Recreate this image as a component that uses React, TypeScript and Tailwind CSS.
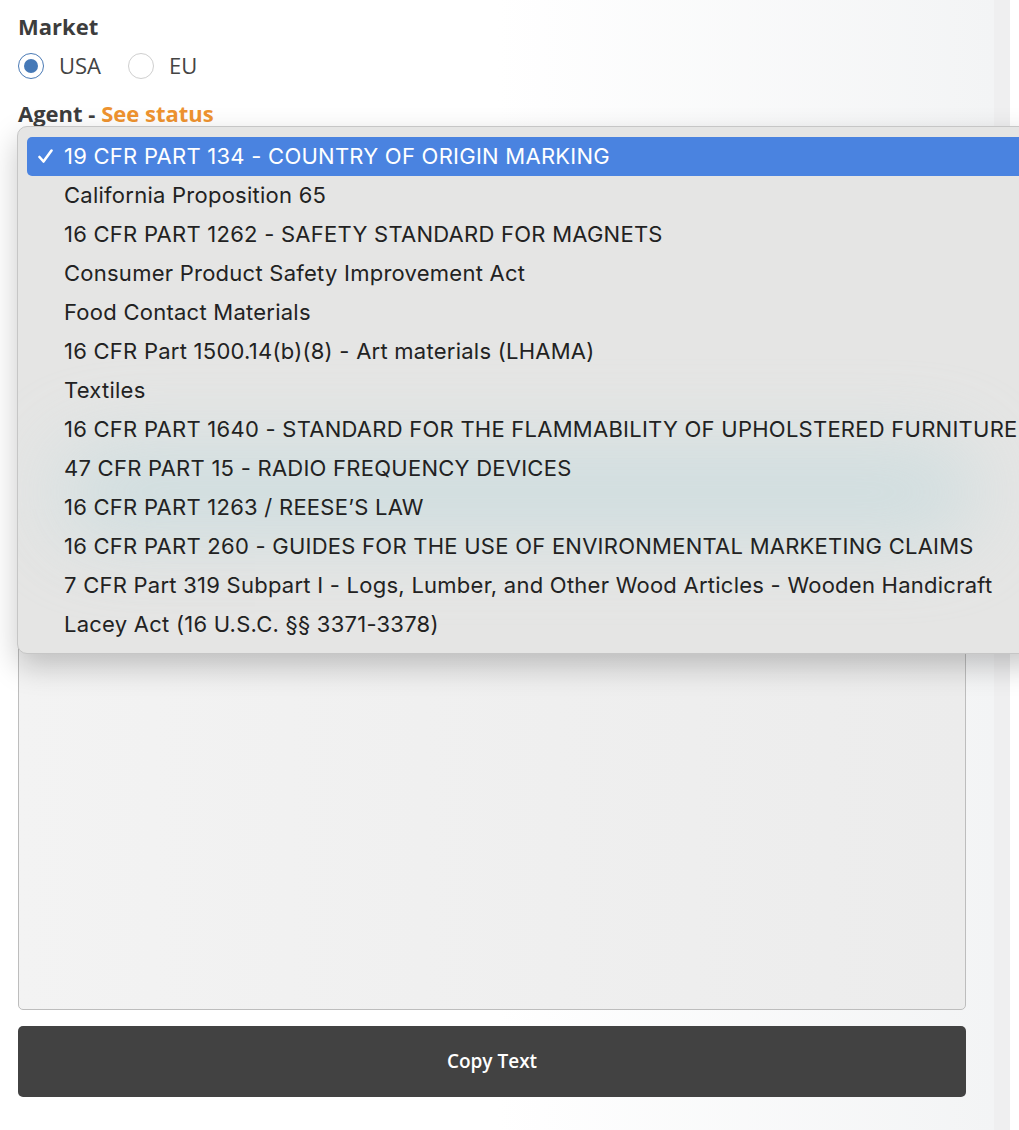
const options = [
  "19 CFR PART 134 - COUNTRY OF ORIGIN MARKING",
  "California Proposition 65",
  "16 CFR PART 1262 - SAFETY STANDARD FOR MAGNETS",
  "Consumer Product Safety Improvement Act",
  "Food Contact Materials",
  "16 CFR Part 1500.14(b)(8) - Art materials (LHAMA)",
  "Textiles",
  "16 CFR PART 1640 - STANDARD FOR THE FLAMMABILITY OF UPHOLSTERED FURNITURE",
  "47 CFR PART 15 - RADIO FREQUENCY DEVICES",
  "16 CFR PART 1263 / REESE\u2019S LAW",
  "16 CFR PART 260 - GUIDES FOR THE USE OF ENVIRONMENTAL MARKETING CLAIMS",
  "7 CFR Part 319 Subpart I - Logs, Lumber, and Other Wood Articles - Wooden Handicraft",
  "Lacey Act (16 U.S.C. \u00a7\u00a7 3371-3378)",
];

function Radio({ label, checked }: { label: string; checked?: boolean }) {
  return (
    <label className="flex items-center gap-[15px]">
      <span
        className={
          checked
            ? "w-[26px] h-[26px] rounded-full border border-[#4a7ab5] bg-white flex items-center justify-center"
            : "w-[26px] h-[26px] rounded-full border border-[#cfcfcf] bg-white"
        }
      >
        {checked && <span className="w-[14px] h-[14px] rounded-full bg-[#4679b7]" />}
      </span>
      <span className="text-[22px] text-[#444]">{label}</span>
    </label>
  );
}

export default function App() {
  return (
    <div className="relative w-[1019px] h-[1130px] overflow-hidden flex bg-white font-['Open_Sans',sans-serif]">
      <div className="w-[994px] bg-gradient-to-r from-white via-white to-[#f3f4f5] pl-[18px] pr-[28px]">
        <h2 className="mt-[10px] text-[22px] leading-[32px] font-bold text-[#3d3d3d]">Market</h2>
        <div className="mt-[7px] flex items-center gap-[27px]">
          <Radio label="USA" checked />
          <Radio label="EU" />
        </div>
        <h2 className="mt-[15px] text-[22px] leading-[32px] font-bold text-[#3d3d3d]">
          Agent - <span className="text-[#ee9330]">See status</span>
        </h2>
        <div className="mt-[12px] h-[40px] rounded border border-[#bbb] bg-[#f2f2f2]" />
        <div className="mt-[18px] h-[811px] rounded-[5px] border border-[#bdbdbd] bg-gradient-to-r from-[#f3f3f3] to-[#ececec]" />
        <button className="mt-[16px] w-full h-[71px] rounded-[5px] bg-[#424242] text-white text-[19px] font-semibold">
          Copy Text
        </button>
      </div>
      <div className="w-[16px] bg-[#efeff0]" />
      <div className="flex-1 bg-white" />

      <div className="absolute left-[17px] top-[126px] w-[1030px] h-[528px] rounded-[10px] border border-[#c6c6c6] bg-[#e5e5e4] shadow-[0_12px_30px_rgba(0,0,0,0.22)] overflow-hidden font-['Inter',sans-serif]">
        <div className="absolute left-[40px] top-[320px] w-[920px] h-[90px] rounded-full bg-[#c4dadd] opacity-70 blur-2xl" />
        <ul className="relative pt-[10px] pl-[9px]">
          {options.map((o, i) => (
            <li
              key={o}
              className={
                i === 0
                  ? "relative h-[39px] flex items-center pl-[37px] rounded-l-[5px] bg-[#4a83e0] text-white text-[22px] tracking-[0.25px] whitespace-nowrap"
                  : "relative h-[39px] flex items-center pl-[37px] text-[#222] text-[22px] tracking-[0.25px] whitespace-nowrap"
              }
            >
              {i === 0 && (
                <svg className="absolute left-[11px] top-[12px]" width="15" height="15" viewBox="0 0 15 15" fill="none">
                  <path d="M1.5 8 L5.5 12.5 L13.5 1.5" stroke="white" strokeWidth="2.6" strokeLinecap="round" strokeLinejoin="round" />
                </svg>
              )}
              {o}
            </li>
          ))}
        </ul>
      </div>
    </div>
  );
}
